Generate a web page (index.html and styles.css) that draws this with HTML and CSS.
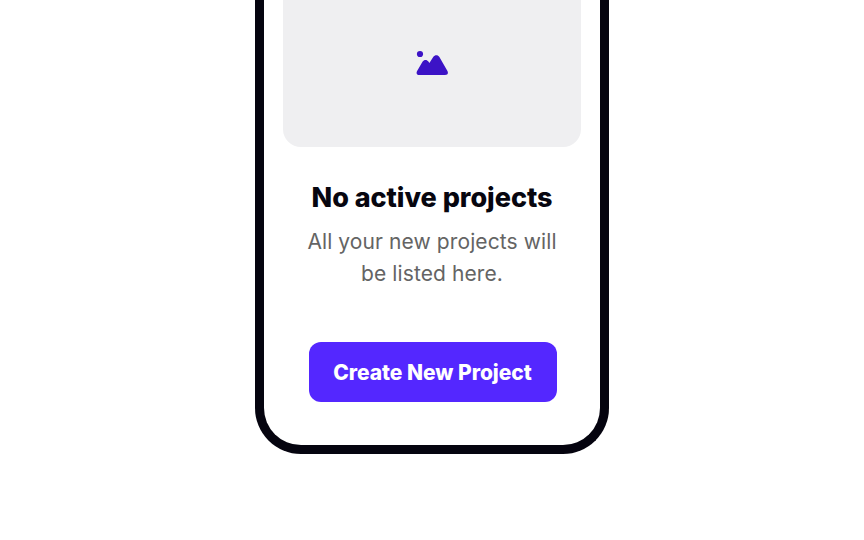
FILE: index.html
```html
<!DOCTYPE html>
<html lang="en">
<head>
<meta charset="utf-8">
<title>Projects</title>
<link rel="stylesheet" href="styles.css">
</head>
<body>
<main class="phone">
  <div class="preview">
    <svg class="picture" viewBox="0 0 34 26" aria-hidden="true">
      <circle cx="4" cy="4" r="3.1"/>
      <path d="M3.4 25C.8 25-.1 23.300 1.100 21.100L6.500 11.800C8 9.300 10.900 9.300 12.400 11.500L13.400 13L17.200 7C18.900 4.500 21.900 4.600 23.400 7L31.300 20.700C32.700 23.200 31.600 25 29 25Z"/>
    </svg>
  </div>
  <h1 class="title">No active projects</h1>
  <p class="message">All your new projects will<br>be listed here.</p>
  <button class="action">Create New Project</button>
</main>
</body>
</html>
```
FILE: styles.css
```css
* {
  box-sizing: border-box;
}

body {
  margin: 0;
  height: 540px;
  overflow: hidden;
  background: #fff;
  font-family: Inter, "Liberation Sans", sans-serif;
}

.phone {
  display: flex;
  flex-direction: column;
  align-items: center;
  width: 354px;
  height: 454px;
  margin: 0 auto;
  border: 9px solid #05040f;
  border-top: 0;
  border-radius: 0 0 46px 46px;
}

.preview {
  display: flex;
  justify-content: center;
  width: 298px;
  height: 147px;
  padding: 50px 0 0;
  border-radius: 0 0 18px 18px;
  background: #efeff1;
}

.picture {
  width: 34px;
  height: 26px;
  margin-left: 1px;
  fill: #3c13c6;
}

.title {
  margin: 33px 0 0;
  color: #07060f;
  font-size: 27px;
  font-weight: 800;
  line-height: 36px;
  letter-spacing: -0.03px;
  white-space: nowrap;
}

.message {
  margin: 10px 0 0;
  color: #646464;
  font-size: 21px;
  line-height: 31.5px;
  letter-spacing: 0.1px;
  text-align: center;
  white-space: nowrap;
}

.action {
  width: 248px;
  height: 60px;
  margin: 53px 0 0 1px;
  padding: 1px 0 0;
  border: 0;
  border-radius: 12px;
  background: #5427ff;
  color: #fff;
  font: 800 21px/30px Inter, "Liberation Sans", sans-serif;
  letter-spacing: -0.03px;
  white-space: nowrap;
}
```
